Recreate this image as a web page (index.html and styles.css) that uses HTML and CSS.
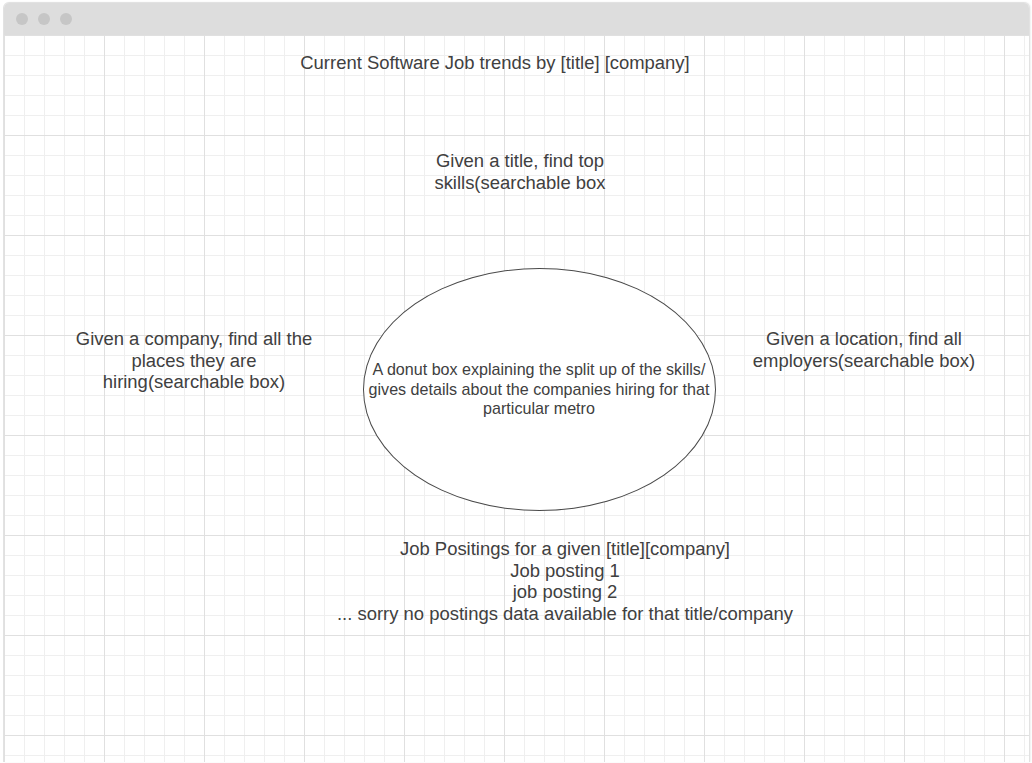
FILE: index.html
```html
<!DOCTYPE html>
<html>
<head>
<meta charset="utf-8">
<link rel="stylesheet" href="styles.css">
</head>
<body>
<div class="window">
  <div class="titlebar">
    <span class="dot"></span><span class="dot"></span><span class="dot"></span>
  </div>
  <div class="canvas">
    <div class="node title">Current Software Job trends by [title] [company]</div>
    <div class="node skills">Given a title, find top<br>skills(searchable box</div>
    <div class="node company">Given a company, find all the<br>places they are<br>hiring(searchable box)</div>
    <div class="node location">Given a location, find all<br>employers(searchable box)</div>
    <div class="node donut">A donut box explaining the split up of the skills/<br>gives details about the companies hiring for that<br>particular metro</div>
    <div class="node postings">Job Positings for a given [title][company]<br>Job posting 1<br>job posting 2<br>... sorry no postings data available for that title/company</div>
  </div>
</div>
</body>
</html>
```
FILE: styles.css
```css
html, body {
  margin: 0;
  padding: 0;
  background: #ffffff;
  overflow: hidden;
}
body {
  width: 1032px;
  height: 763px;
  font-family: "Liberation Sans", Arial, sans-serif;
}
.window {
  position: absolute;
  left: 3px;
  top: 2px;
  width: 1025px;
  height: 759px;
  border: 1px solid #e2e2e2;
  border-bottom: none;
  border-radius: 6px 6px 0 0;
  box-shadow: 1px 0 2px rgba(0,0,0,0.06);
  overflow: hidden;
  background: #fff;
}
.titlebar {
  height: 32px;
  background: #dddddd;
  display: flex;
  align-items: center;
  gap: 10px;
  padding-left: 12px;
}
.dot {
  width: 12px;
  height: 12px;
  border-radius: 50%;
  background: #c6c6c6;
}
.canvas {
  position: relative;
  height: 727px;
  background-color: #fff;
  background-image:
    linear-gradient(to right, #e0e0e0 1px, transparent 1px),
    linear-gradient(to bottom, #e0e0e0 1px, transparent 1px),
    linear-gradient(to right, #efefef 1px, transparent 1px),
    linear-gradient(to bottom, #efefef 1px, transparent 1px);
  background-size: 100px 100px, 100px 100px, 20px 20px, 20px 20px;
  background-position: 0 0, 0 0, 0 0, 0 0;
}
.node {
  position: absolute;
  color: #404040;
  font-size: 18.45px;
  line-height: 21.67px;
  text-align: center;
  white-space: nowrap;
  transform: translateX(-50%);
}
.title { left: 491px; top: 17px; }
.skills { left: 516px; top: 115px; }
.company { left: 190px; top: 293px; }
.location { left: 860px; top: 293px; }
.postings { left: 561px; top: 503px; }
.donut {
  left: 534.5px;
  top: 233px;
  width: 353px;
  height: 243px;
  transform: none;
  margin-left: -176px;
  border: 1px solid #4a4a4a;
  border-radius: 50%;
  background: #fff;
  font-size: 16.1px;
  line-height: 19.5px;
  display: flex;
  align-items: center;
  justify-content: center;
  box-sizing: border-box;
}
```
